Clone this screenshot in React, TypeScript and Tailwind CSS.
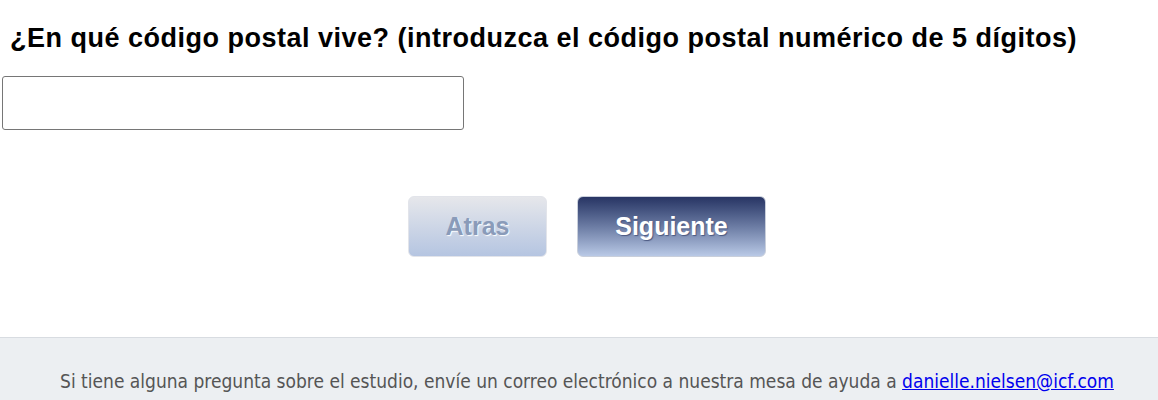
import React from "react";

export default function App() {
  return (
    <div className="w-[1158px] h-[400px] bg-white overflow-hidden flex flex-col" style={{ fontFamily: '"Liberation Sans", Arial, sans-serif' }}>
      <div className="px-[10px] pt-[20px]">
        <h1 className="text-[27px] leading-[36px] font-bold text-black m-0 tracking-[0.5px] whitespace-nowrap" style={{ fontFamily: '"Liberation Sans", Arial, sans-serif' }}>
          ¿En qué código postal vive? (introduzca el código postal numérico de 5 dígitos)
        </h1>
      </div>
      <div className="pl-[2px] pt-[20px]">
        <input type="text" className="block w-[462px] h-[54px] border border-[#767676] rounded-[3px] bg-white outline-none" />
      </div>
      <div className="flex justify-center gap-[30px] pt-[66px] pl-[16px]">
        <button className="w-[139px] h-[61px] rounded-[6px] border border-[#e2e4ea] bg-gradient-to-b from-[#e6e7eb] to-[#b5c5e1] text-[25px] font-bold text-[#8a9bb9] [text-shadow:1px_1px_1px_#ffffff]">
          Atras
        </button>
        <button className="w-[189px] h-[61px] rounded-[6px] border border-[#c9cfdb] bg-gradient-to-b from-[#283564] to-[#b9c9e6] text-[25px] font-bold text-white [text-shadow:1px_1px_1px_#4a5880]">
          Siguiente
        </button>
      </div>
      <div className="mt-[80px] flex-1 border-t border-[#d8dce1] bg-[#eceff2] flex justify-center pl-[16px] pt-[30px]">
        <p className="text-[19px] text-[#555555] leading-[26px] m-0 whitespace-nowrap" style={{ fontFamily: 'Tahoma, "DejaVu Sans Condensed", sans-serif' }}>
          Si tiene alguna pregunta sobre el estudio, envíe un correo electrónico a nuestra mesa de ayuda a{" "}
          <a href="#" className="text-[#0000ee] underline">danielle.nielsen@icf.com</a>
        </p>
      </div>
    </div>
  );
}
